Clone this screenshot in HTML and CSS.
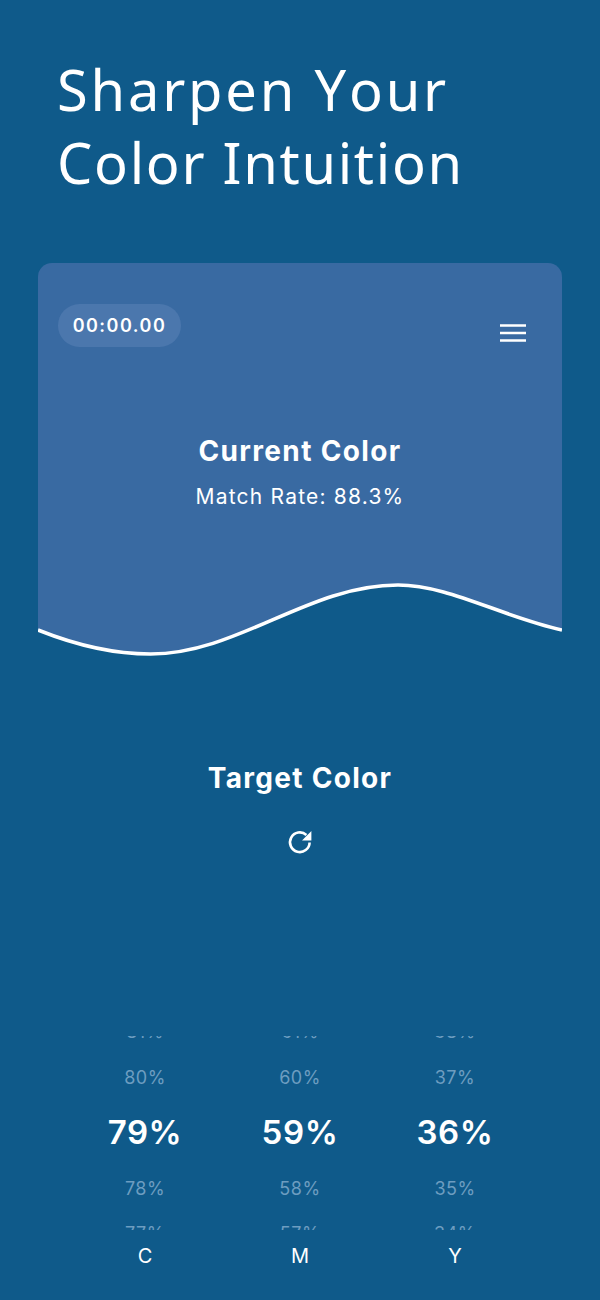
FILE: index.html
```html
<!DOCTYPE html>
<html lang="en">
<head>
<meta charset="utf-8">
<title>Sharpen Your Color Intuition</title>
<link rel="stylesheet" href="styles.css">
</head>
<body>
<main class="page">
  <h1 class="title"><span class="title-wide">Sharpen Your</span><br>Color Intuition</h1>
  <section class="card">
    <div class="card-top">
      <div class="timer">00:00.00</div>
      <svg class="menu" width="28" height="20" viewBox="0 0 28 20" aria-label="Menu">
        <path d="M1 2.5H27M1 10H27M1 17.5H27" stroke="#fff" stroke-width="2.4" fill="none"/>
      </svg>
    </div>
    <h2 class="card-heading">Current Color</h2>
    <p class="match">Match Rate: 88.3%</p>
    <svg class="wave" width="524" height="80" viewBox="0 0 524 80">
      <path class="wave-fill" d="M0 50C40 66 75 74 112.500 74C200 74 270 5 360 5C410 5 462 36 524 50V80H0Z"/>
      <path class="wave-line" d="M0 50C40 66 75 74 112.500 74C200 74 270 5 360 5C410 5 462 36 524 50"/>
    </svg>
  </section>
  <section class="target">
    <h2 class="target-heading">Target Color</h2>
    <svg class="refresh" width="26" height="26" viewBox="0 0 26 26" aria-label="Reload">
      <path d="M22.6 13.4A9.8 9.8 0 1 1 19.4 6" stroke="#fff" stroke-width="2.6" fill="none"/>
      <path d="M24.4 2V11.4H15Z" fill="#fff"/>
    </svg>
  </section>
  <section class="pickers">
    <div class="picker">
      <div class="wheel">
        <span class="item far">81%</span><span class="item">80%</span><span class="item active">79%</span><span class="item">78%</span><span class="item far">77%</span>
      </div>
      <div class="label">C</div>
    </div>
    <div class="picker">
      <div class="wheel">
        <span class="item far">61%</span><span class="item">60%</span><span class="item active">59%</span><span class="item">58%</span><span class="item far">57%</span>
      </div>
      <div class="label">M</div>
    </div>
    <div class="picker">
      <div class="wheel">
        <span class="item far">38%</span><span class="item">37%</span><span class="item active">36%</span><span class="item">35%</span><span class="item far">34%</span>
      </div>
      <div class="label">Y</div>
    </div>
  </section>
</main>
</body>
</html>
```
FILE: styles.css
```css
* { box-sizing: border-box; }
html, body { margin: 0; padding: 0; }
body {
  width: 600px;
  height: 1300px;
  overflow: hidden;
  background: #0f5a8a;
  color: #fff;
  font-family: Inter, "Liberation Sans", sans-serif;
}
.page { display: flex; flex-direction: column; height: 1300px; }
.title {
  margin: 0;
  padding: 53px 0 0 57px;
  height: 263px;
  font-family: "Noto Sans", sans-serif;
  font-weight: 400;
  font-size: 56px;
  line-height: 73px;
  letter-spacing: 1.7px;
  font-kerning: none;
}
.title-wide { letter-spacing: 2.8px; }
.card {
  position: relative;
  width: 524px;
  height: 397px;
  margin-left: 38px;
  padding: 41px 35px 0 20px;
  background: #396aa2;
  border-radius: 14px 14px 0 0;
  overflow: hidden;
  text-align: center;
}
.card-top { display: flex; justify-content: space-between; align-items: flex-start; }
.timer {
  width: 123px;
  height: 43px;
  border-radius: 22px;
  background: #4b77ad;
  font-size: 18px;
  font-weight: 600;
  line-height: 43px;
  letter-spacing: 1.5px;
}
.menu { margin-top: 19px; }
.card-heading {
  margin: 86px 0 0 -20px;
  width: 524px;
  font-size: 28px;
  font-weight: 700;
  line-height: 36px;
  letter-spacing: 1.35px;
}
.match {
  margin: 14px 0 0 -20px;
  width: 524px;
  font-size: 21px;
  font-weight: 400;
  line-height: 28px;
  letter-spacing: 1.2px;
}
.wave { position: absolute; left: 0; bottom: 0; display: block; }
.wave-fill { fill: #0f5a8a; }
.wave-line { fill: none; stroke: #fff; stroke-width: 3.6; }
.target {
  display: flex;
  flex-direction: column;
  align-items: center;
  padding-top: 100px;
  height: 376px;
}
.target-heading {
  margin: 0;
  font-size: 28px;
  font-weight: 700;
  line-height: 36px;
  letter-spacing: 1.3px;
}
.refresh { margin-top: 33px; }
.pickers {
  display: flex;
  justify-content: center;
}
.picker { width: 155px; display: flex; flex-direction: column; align-items: center; }
.wheel {
  width: 155px;
  height: 194px;
  overflow: hidden;
  display: flex;
  flex-direction: column;
  align-items: center;
  justify-content: center;
}
.item {
  flex: none;
  height: 55.5px;
  line-height: 55.5px;
  font-size: 18px;
  color: #6d9dc0;
  letter-spacing: 0.5px;
}
.far { height: 35.5px; line-height: 35.5px; }
.active {
  font-size: 33px;
  font-weight: 600;
  color: #fff;
  letter-spacing: 0.6px;
}
.label {
  margin-top: 12px;
  font-size: 20px;
  line-height: 28px;
}
```
